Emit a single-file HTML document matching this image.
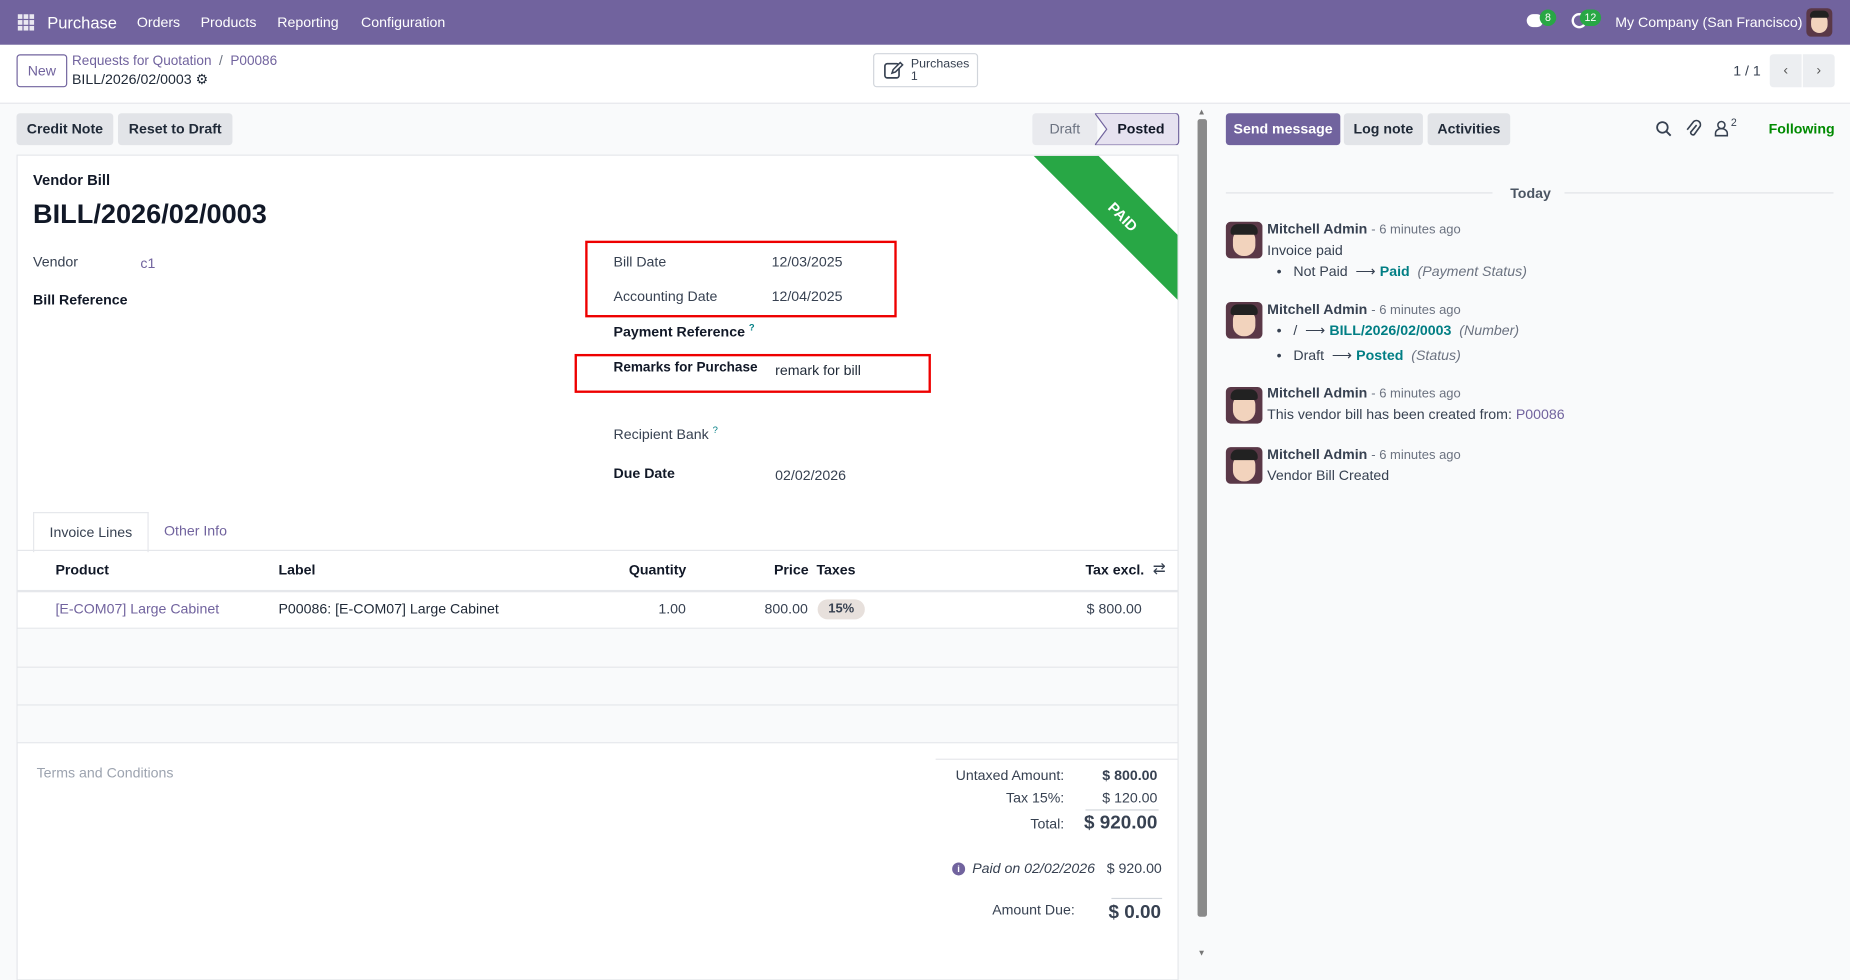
<!DOCTYPE html>
<html><head><meta charset="utf-8"><style>
*{box-sizing:border-box;margin:0;padding:0}
html,body{width:1850px;height:966px;overflow:hidden;background:#f9fafb}
#w{position:absolute;left:0;top:0;width:1568px;height:819px;transform:scale(1.17985);transform-origin:0 0;font-family:"Liberation Sans",sans-serif;font-size:12px;color:#374151;background:#f9fafb}
.a{position:absolute;white-space:nowrap}
.b{font-weight:bold;color:#111827}
.lk{color:#71639e}
.tl{color:#017e84}
.btn{position:absolute;background:#e2e4e8;border-radius:3px;font-weight:bold;color:#1f2937;text-align:center;line-height:27px;height:27px}
.hl{position:absolute;left:14px;width:984px;height:1px;background:#e5e7eb}
.av{position:absolute;left:1039px;width:31px;height:31px;border-radius:4px;background:#5a3847;overflow:hidden}
.av i{position:absolute;left:6px;top:7px;width:19px;height:22px;border-radius:8px 8px 9px 9px;background:#f2d3bd}
.av b{position:absolute;left:4px;top:2px;width:23px;height:9px;border-radius:6px 6px 2px 2px;background:#222}
.grey{color:#6b7280}
</style></head><body><div id="w">
<div class="a" style="left:0;top:0;width:1568px;height:38px;background:#71639e"></div>
<svg class="a" style="left:15px;top:12px" width="14" height="14"><g fill="#fff" opacity=".85"><rect x="0" y="0" width="4" height="4"/><rect x="5" y="0" width="4" height="4"/><rect x="10" y="0" width="4" height="4"/><rect x="0" y="5" width="4" height="4"/><rect x="5" y="5" width="4" height="4"/><rect x="10" y="5" width="4" height="4"/><rect x="0" y="10" width="4" height="4"/><rect x="5" y="10" width="4" height="4"/><rect x="10" y="10" width="4" height="4"/></g></svg>
<div class="a" style="left:40px;top:11px;color:#fff;font-size:14px">Purchase</div>
<div class="a" style="left:116px;top:12px;color:#fff">Orders</div>
<div class="a" style="left:170px;top:12px;color:#fff">Products</div>
<div class="a" style="left:235px;top:12px;color:#fff">Reporting</div>
<div class="a" style="left:306px;top:12px;color:#fff">Configuration</div>
<div class="a" style="left:1294px;top:12px;width:14px;height:11px;border-radius:6px;background:#fff"></div>
<div class="a" style="left:1305px;top:8px;width:14px;height:14px;border-radius:7px;background:#28a745;color:#fff;font-size:9px;text-align:center;line-height:14px">8</div>
<div class="a" style="left:1332px;top:11px;width:13px;height:13px;border-radius:7px;border:2.5px solid #fff"></div>
<div class="a" style="left:1339px;top:8px;width:18px;height:14px;border-radius:7px;background:#28a745;color:#fff;font-size:9px;text-align:center;line-height:14px">12</div>
<div class="a" style="left:1369px;top:12px;color:#fff">My Company (San Francisco)</div>
<div class="av" style="left:1531px;top:7px;width:22px;height:24px"><i style="left:4px;top:5px;width:14px;height:16px"></i><b style="left:3px;top:2px;width:16px;height:6px"></b></div>
<div class="a" style="left:0;top:38px;width:1568px;height:50px;background:#fff;border-bottom:1px solid #e5e7eb"></div>
<div class="a" style="left:14px;top:46px;width:43px;height:28px;border:1px solid #71639e;border-radius:3px;color:#71639e;text-align:center;line-height:26px">New</div>
<div class="a lk" style="left:61px;top:46px;font-size:11.5px">Requests for Quotation &nbsp;<span style="color:#6b7280">/</span>&nbsp; P00086</div>
<div class="a" style="left:61px;top:60px;font-size:12px;color:#1f2937">BILL/2026/02/0003 <span style="font-size:12px">⚙</span></div>
<div class="a" style="left:740px;top:45px;width:89px;height:29px;border:1px solid #d1d5db;border-radius:3px;background:#fff"></div>
<svg class="a" style="left:749px;top:51px" width="18" height="17"><rect x="1" y="3" width="12" height="12" rx="2" fill="none" stroke="#374151" stroke-width="1.4"/><path d="M7 11l1-3 6-6 2 2-6 6z" fill="#fff" stroke="#374151" stroke-width="1.3"/></svg>
<div class="a" style="left:772px;top:49px;font-size:10.5px;line-height:11px;color:#374151">Purchases<br>1</div>
<div class="a" style="left:1469px;top:53px;color:#374151">1 / 1</div>
<div class="a" style="left:1500px;top:46px;width:27px;height:28px;background:#eceef1;border-radius:3px 0 0 3px;text-align:center;line-height:27px;color:#555">‹</div>
<div class="a" style="left:1528px;top:46px;width:27px;height:28px;background:#eceef1;border-radius:0 3px 3px 0;text-align:center;line-height:27px;color:#555">›</div>
<div class="btn" style="left:14px;top:96px;width:82px">Credit Note</div>
<div class="btn" style="left:100px;top:96px;width:97px">Reset to Draft</div>
<div class="a" style="left:875px;top:96px;width:55px;height:27px;background:#e9eaee;color:#6b7280;line-height:27px;text-align:center;border-radius:3px 0 0 3px">Draft</div>
<svg class="a" style="left:928px;top:96px" width="72" height="27"><path d="M0 0H68a3 3 0 0 1 3 3V24a3 3 0 0 1-3 3H0L10 13.5Z" fill="#e6e2f0" stroke="#71639e" stroke-width="1"/></svg>
<div class="a b" style="left:947px;top:102px;color:#111827">Posted</div>
<div class="a" style="left:14px;top:131px;width:985px;height:700px;background:#fff;border:1px solid #e5e7eb;overflow:hidden">
 <svg style="position:absolute;left:0;top:0" width="985" height="200"><polygon points="861,0 916,0 985,69 985,124" fill="#28a745"/></svg>
 <div style="position:absolute;left:922px;top:45px;color:#fff;font-weight:bold;font-size:12.5px;transform:rotate(45deg)">PAID</div>
</div>
<div class="a b" style="left:28px;top:146px;font-size:12.5px">Vendor Bill</div>
<div class="a" style="left:28px;top:168px;font-size:23px;font-weight:bold;color:#111827">BILL/2026/02/0003</div>
<div class="a" style="left:28px;top:215px;color:#374151">Vendor</div>
<div class="a lk" style="left:119px;top:216px">c1</div>
<div class="a b" style="left:28px;top:247px">Bill Reference</div>
<div class="a" style="left:496px;top:204px;width:264px;height:65px;border:2px solid #e00"></div>
<div class="a" style="left:520px;top:215px">Bill Date</div><div class="a" style="left:654px;top:215px">12/03/2025</div>
<div class="a" style="left:520px;top:244px">Accounting Date</div><div class="a" style="left:654px;top:244px">12/04/2025</div>
<div class="a b" style="left:520px;top:273px">Payment Reference <sup class="tl" style="font-size:8px">?</sup></div>
<div class="a" style="left:487px;top:300px;width:302px;height:33px;border:2px solid #e00"></div>
<div class="a b" style="left:520px;top:306px;font-size:11.5px">Remarks for Purchase</div>
<div class="a" style="left:657px;top:307px;color:#1f2937">remark for bill</div>
<div class="a" style="left:520px;top:360px">Recipient Bank <sup class="tl" style="font-size:8px">?</sup></div>
<div class="a b" style="left:520px;top:394px">Due Date</div>
<div class="a" style="left:657px;top:396px">02/02/2026</div>
<div class="a" style="left:28px;top:434px;width:98px;height:34px;background:#fff;border:1px solid #e5e7eb;border-bottom:none;text-align:center;line-height:32px">Invoice Lines</div>
<div class="a lk" style="left:139px;top:443px">Other Info</div>
<div class="hl" style="top:466px"></div>
<div class="a b" style="left:47px;top:476px">Product</div>
<div class="a b" style="left:236px;top:476px">Label</div>
<div class="a b" style="left:533px;top:476px">Quantity</div>
<div class="a b" style="left:656px;top:476px">Price</div>
<div class="a b" style="left:692px;top:476px">Taxes</div>
<div class="a b" style="left:920px;top:476px">Tax excl.</div>
<div class="a" style="left:977px;top:474px;font-size:13px">⇄</div>
<div class="hl" style="top:500px;height:2px"></div>
<div class="a lk" style="left:47px;top:509px">[E-COM07] Large Cabinet</div>
<div class="a" style="left:236px;top:509px;color:#1f2937">P00086: [E-COM07] Large Cabinet</div>
<div class="a" style="left:558px;top:509px">1.00</div>
<div class="a" style="left:648px;top:509px">800.00</div>
<div class="a" style="left:693px;top:508px;width:40px;height:17px;border-radius:9px;background:#e7e0dc;font-size:11px;font-weight:bold;text-align:center;line-height:17px">15%</div>
<div class="a" style="left:921px;top:509px">$ 800.00</div>
<div class="hl" style="top:532px"></div>
<div class="a" style="left:15px;top:533px;width:983px;height:96px;background:#f9fafb"></div>
<div class="hl" style="top:565px"></div>
<div class="hl" style="top:597px"></div>
<div class="hl" style="top:629px"></div>
<div class="a" style="left:31px;top:648px;color:#9ca3af">Terms and Conditions</div>
<div class="a" style="left:793px;top:643px;width:205px;height:1px;background:#e5e7eb"></div>
<div class="a" style="right:666px;top:650px;text-align:right">Untaxed Amount:</div><div class="a b" style="right:587px;top:650px;color:#374151">$ 800.00</div>
<div class="a" style="right:666px;top:669px">Tax 15%:</div><div class="a" style="right:587px;top:669px">$ 120.00</div>
<div class="a" style="left:920px;top:686px;width:62px;height:1px;background:#d1d5db"></div>
<div class="a" style="right:666px;top:691px">Total:</div><div class="a b" style="right:587px;top:689px;font-size:16px;color:#374151">$ 920.00</div>
<div class="a" style="left:807px;top:731px;width:11px;height:11px;border-radius:6px;background:#71639e;color:#fff;font-size:8px;font-weight:bold;text-align:center;line-height:11px">i</div>
<div class="a" style="left:824px;top:729px;font-style:italic">Paid on 02/02/2026</div><div class="a" style="left:938px;top:729px">$ 920.00</div>
<div class="a" style="left:942px;top:761px;width:43px;height:1px;background:#d1d5db"></div>
<div class="a" style="right:657px;top:764px">Amount Due:</div><div class="a b" style="right:584px;top:765px;font-size:16px;color:#374151">$ 0.00</div>
<div class="a" style="left:1015px;top:92px;font-size:7px;color:#777">▲</div>
<div class="a" style="left:1015px;top:101px;width:8px;height:676px;background:#8a8a8a;border-radius:2px"></div>
<div class="a" style="left:1015px;top:805px;font-size:7px;color:#777">▼</div>
<div class="btn" style="left:1039px;top:96px;width:97px;background:#71639e;color:#fff">Send message</div>
<div class="btn" style="left:1139px;top:96px;width:67px">Log note</div>
<div class="btn" style="left:1210px;top:96px;width:70px">Activities</div>
<svg class="a" style="left:1403px;top:102px" width="14" height="14"><circle cx="6" cy="6" r="4.5" fill="none" stroke="#374151" stroke-width="1.5"/><path d="M9.5 9.5L13 13" stroke="#374151" stroke-width="1.6"/></svg>
<svg class="a" style="left:1428px;top:101px" width="14" height="16"><path d="M10 5L5 11a2 2 0 0 0 3 2l5-7a3.5 3.5 0 0 0-5.5-4L2 9" fill="none" stroke="#374151" stroke-width="1.4"/></svg>
<svg class="a" style="left:1453px;top:101px" width="12" height="15"><circle cx="6" cy="5" r="3" fill="none" stroke="#374151" stroke-width="1.3"/><path d="M1 14v-2a5 4 0 0 1 10 0v2z" fill="none" stroke="#374151" stroke-width="1.3"/></svg>
<div class="a" style="left:1467px;top:99px;font-size:9px">2</div>
<div class="a b" style="left:1499px;top:102px;color:#008a00">Following</div>
<div class="a" style="left:1039px;top:163px;width:226px;height:1px;background:#e1e3e7"></div>
<div class="a" style="left:1326px;top:163px;width:228px;height:1px;background:#e1e3e7"></div>
<div class="a b" style="left:1280px;top:157px;color:#4b5563">Today</div>
<div class="av" style="top:188px"><i></i><b></b></div>
<div class="a" style="left:1074px;top:187px"><span class="b" style="color:#374151">Mitchell Admin</span> <span class="grey" style="font-size:11px">- 6 minutes ago</span></div>
<div class="a" style="left:1074px;top:205px">Invoice paid</div>
<div class="a" style="left:1082px;top:223px">•&nbsp;&nbsp;&nbsp;Not Paid &nbsp;⟶ <span class="tl b">Paid</span> &nbsp;<i class="grey">(Payment Status)</i></div>
<div class="av" style="top:256px"><i></i><b></b></div>
<div class="a" style="left:1074px;top:255px"><span class="b" style="color:#374151">Mitchell Admin</span> <span class="grey" style="font-size:11px">- 6 minutes ago</span></div>
<div class="a" style="left:1082px;top:273px">•&nbsp;&nbsp;&nbsp;/ &nbsp;⟶ <span class="tl b">BILL/2026/02/0003</span> &nbsp;<i class="grey">(Number)</i></div>
<div class="a" style="left:1082px;top:294px">•&nbsp;&nbsp;&nbsp;Draft &nbsp;⟶ <span class="tl b">Posted</span> &nbsp;<i class="grey">(Status)</i></div>
<div class="av" style="top:328px"><i></i><b></b></div>
<div class="a" style="left:1074px;top:326px"><span class="b" style="color:#374151">Mitchell Admin</span> <span class="grey" style="font-size:11px">- 6 minutes ago</span></div>
<div class="a" style="left:1074px;top:344px">This vendor bill has been created from: <span class="lk">P00086</span></div>
<div class="av" style="top:379px"><i></i><b></b></div>
<div class="a" style="left:1074px;top:378px"><span class="b" style="color:#374151">Mitchell Admin</span> <span class="grey" style="font-size:11px">- 6 minutes ago</span></div>
<div class="a" style="left:1074px;top:396px">Vendor Bill Created</div>
</div></body></html>
